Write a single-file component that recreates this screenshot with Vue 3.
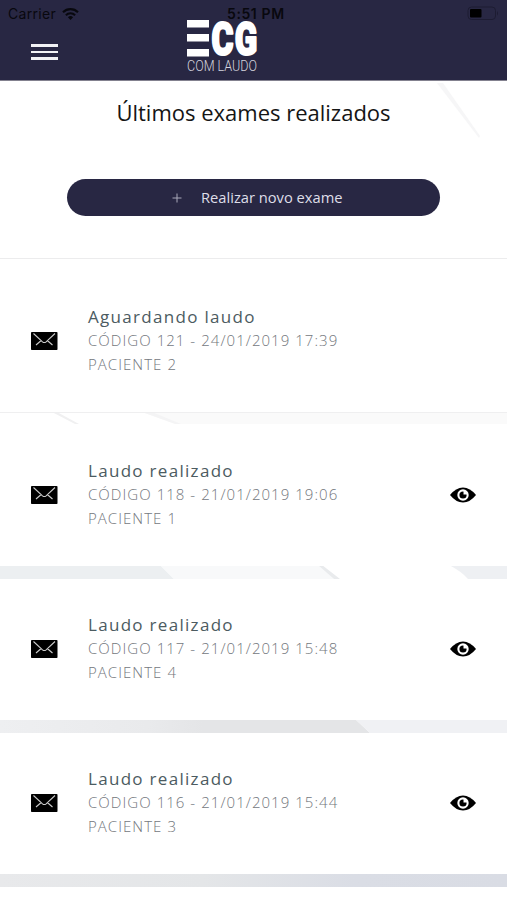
<template>
  <div class="app">
    <svg class="backdrop" width="507" height="820" viewBox="0 80 507 820">
      <defs>
        <linearGradient id="fade3" x1="0" x2="1">
          <stop offset="0" stop-color="#eeeff1" />
          <stop offset="0.4" stop-color="#e9eaec" />
          <stop offset="0.55" stop-color="#e4e5e7" />
          <stop offset="1" stop-color="#e4e5e7" />
        </linearGradient>
        <linearGradient id="fade4" x1="0" x2="1">
          <stop offset="0" stop-color="#e8e9eb" />
          <stop offset="0.4" stop-color="#e4e6e8" />
          <stop offset="0.7" stop-color="#dadde5" />
          <stop offset="1" stop-color="#d9dce4" />
        </linearGradient>
      </defs>
      <path d="M437 83h6l37 53-1 2z" fill="#f6f6f7" />
      <path d="M52 412h5l22 12h-4z" fill="#f0f0f1" />
      <path d="M142 412h365v12H176z" fill="#fafafa" />
      <path d="M142 412h10l29 12h-6z" fill="#f4f4f5" />
      <path d="M0 412h507v1H0z" fill="#efeff0" />
      <path d="M0 565h160l14 14H0z" fill="#eceff1" />
      <path d="M160 565h160l14 14H174z" fill="#f8f9fa" />
      <path d="M318 565h4l18 14h-6z" fill="#e9ebed" />
      <path d="M320 565h130v1H320z" fill="#f5f5f6" />
      <path d="M449 565h58v14h-39q-7-8-19-14z" fill="#eef0f3" />
      <path d="M0 719h355l15 14H0z" fill="url(#fade3)" />
      <path d="M355 719h152v14H370z" fill="#f0f1f4" />
      <path d="M0 873h507v14H0z" fill="url(#fade4)" />
    </svg>

    <header class="header">
      <div class="status">
        <span class="carrier">Carrier</span>
        <svg class="wifi" width="17" height="12" viewBox="0 0 17 12">
          <g fill="none" stroke="#08080e" stroke-width="2.1">
            <path d="M1 4.2a10.6 10.6 0 0 1 15 0" />
            <path d="M3.9 7.2a6.5 6.5 0 0 1 9.2 0" />
          </g>
          <path d="M5.9 9.2a3.7 3.7 0 0 1 5.2 0L8.5 12z" fill="#08080e" />
        </svg>
        <span class="clock">5:51 PM</span>
        <svg class="battery" width="33" height="15" viewBox="0 0 33 15">
          <rect x="1" y="1" width="27.5" height="12.5" rx="3.5" fill="none" stroke="#1d1c32" />
          <rect x="3" y="3" width="11.5" height="8.5" rx="1" fill="#000" />
          <path d="M30 5q2 2.3 0 4.6z" fill="#1d1c32" />
        </svg>
      </div>
      <button class="menu" aria-label="Menu"><i /><i /><i /></button>
      <svg class="logo" width="74" height="60" viewBox="0 0 74 60">
        <g fill="#fff">
          <rect x="1" y="2" width="22" height="7.5" />
          <rect x="1" y="16" width="22" height="7.5" />
          <rect x="1" y="31" width="22" height="7.5" />
          <text class="logo-mark" x="25.5" y="37" textLength="22" lengthAdjust="spacingAndGlyphs">C</text>
          <text class="logo-mark" x="48.8" y="37" textLength="22.5" lengthAdjust="spacingAndGlyphs">G</text>
        </g>
        <text class="logo-sub" x="1" y="53" textLength="70" lengthAdjust="spacingAndGlyphs">COM LAUDO</text>
      </svg>
    </header>

    <section class="intro">
      <h1>Últimos exames realizados</h1>
      <button class="new-exam">
        <svg width="10" height="10" viewBox="0 0 10 10"><path d="M5 .5v9M.5 5h9" stroke="#a9a9ba" fill="none" /></svg>
        <span>Realizar novo exame</span>
      </button>
    </section>

    <ul class="list">
      <li v-for="exam in exams" :key="exam.code" class="card">
        <svg class="mail" width="27" height="18" viewBox="0 0 27 18">
          <rect width="26.5" height="18" rx=".8" fill="#000" />
          <path d="M2.5 1.5L11.5 9.8q1.8 1.5 3.6 0L24 1.5M5 13l5.2-4.5M21.5 13l-5.2-4.5" fill="none" stroke="#ccc" stroke-width="1.1" />
        </svg>
        <div class="info">
          <div class="state">{{ exam.done ? 'Laudo realizado' : 'Aguardando laudo' }}</div>
          <div class="meta">CÓDIGO {{ exam.code }} - {{ exam.date }}</div>
          <div class="meta">PACIENTE {{ exam.patient }}</div>
        </div>
        <svg v-if="exam.done" class="eye" width="26" height="16" viewBox="0 0 26 16">
          <path d="M0 8Q6 .5 13 .5T26 8Q20 15.5 13 15.5T0 8z" fill="#000" />
          <circle cx="13" cy="8" r="5.7" fill="#fff" />
          <circle cx="13" cy="8" r="3.6" fill="#000" />
          <path d="M13.5 4h3.5V7.5h-3.5z" fill="#fff" />
        </svg>
      </li>
    </ul>
    <div class="rest" />
  </div>
</template>

<script setup>
const exams = [
  { code: 121, date: '24/01/2019 17:39', patient: 2, done: false },
  { code: 118, date: '21/01/2019 19:06', patient: 1, done: true },
  { code: 117, date: '21/01/2019 15:48', patient: 4, done: true },
  { code: 116, date: '21/01/2019 15:44', patient: 3, done: true }
]
</script>

<style>
body { margin: 0; background: #fff; overflow: hidden; }
</style>

<style scoped>
.app { position: relative; width: 507px; height: 900px; overflow: hidden; background: #fff; font-family: "Open Sans", sans-serif; display: flex; flex-direction: column; }
.backdrop { position: absolute; left: 0; top: 80px; }
button { border: 0; padding: 0; font-family: inherit; }

.header { position: relative; flex: none; height: 81px; box-sizing: border-box; background: #282743; border-bottom: 1px solid #83818f; }
.status { display: flex; align-items: center; height: 27px; padding: 0 7px 0 8px; font-family: Inter, "Liberation Sans", sans-serif; font-size: 14px; color: #08080e; }
.carrier { letter-spacing: 0.3px; }
.wifi { margin-left: 6px; }
.clock { position: absolute; left: 227px; font-weight: 600; letter-spacing: 0.6px; }
.battery { margin-left: auto; }
.menu { display: flex; flex-direction: column; gap: 4px; width: 27px; margin: 17px 0 0 31px; background: none; }
.menu i { height: 2.5px; width: 27px; background: #f2f2f6; }
.logo { position: absolute; left: 186px; top: 18px; overflow: visible; }
.logo-mark { font-family: Roboto, sans-serif; font-weight: 900; font-size: 47px; stroke: #fff; stroke-width: 2.2px; stroke-linejoin: round; }
.logo-sub { font-family: Roboto, sans-serif; font-weight: 300; font-size: 15px; fill: #d5d5df; }

.intro { position: relative; flex: none; height: 178px; box-sizing: border-box; padding-top: 16px; display: flex; flex-direction: column; align-items: center; border-bottom: 1px solid #ececed; }
h1 { margin: 0; font-size: 22px; line-height: 30px; font-weight: 400; color: #151515; white-space: nowrap; }
.new-exam { display: flex; align-items: center; width: 373px; height: 37px; margin-top: 52px; padding-left: 105px; border-radius: 19px; background: #282743; color: #dedee8; font-size: 14.7px; }
.new-exam span { margin: 0 0 2px 19px; white-space: nowrap; }

.list { position: relative; flex: none; margin: 12px 0 0; padding: 0; list-style: none; display: grid; gap: 13px; }
.card { display: flex; align-items: center; height: 141px; box-sizing: border-box; padding: 0 31px 2px; background: #fff; }
.info { margin-left: 30px; flex: 1; }
.state { font-size: 17px; line-height: 23px; letter-spacing: 1.3px; color: #4c5b61; }
.meta { font-size: 15px; line-height: 24px; letter-spacing: 1.04px; font-weight: 300; color: #73777d; white-space: nowrap; }
.rest { position: relative; flex: 1; margin-top: 13px; background: #fff; }
</style>
